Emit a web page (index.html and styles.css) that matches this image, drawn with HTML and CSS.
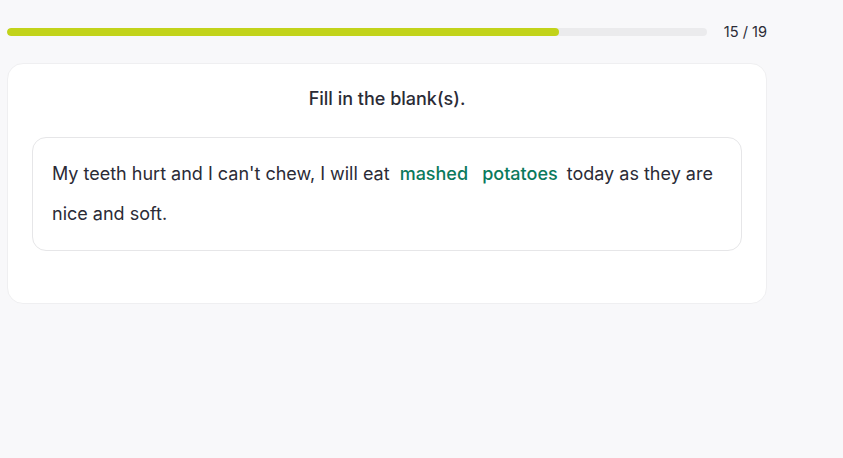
FILE: index.html
```html
<!DOCTYPE html>
<html>
<head>
<meta charset="utf-8">
<link rel="stylesheet" href="styles.css">
</head>
<body>
<div class="wrap">
  <div class="progress-row">
    <div class="track"><div class="fill" style="width: 78.9%"></div></div>
    <div class="count">15 / 19</div>
  </div>
  <div class="card">
    <div class="title">Fill in the blank(s).</div>
    <div class="sentence-box">
      <p class="sentence">My teeth hurt and I can't chew, I will eat <span class="blank">mashed</span> <span class="blank">potatoes</span> today as they are nice and soft.</p>
    </div>
  </div>
</div>
</body>
</html>
```
FILE: styles.css
```css
html, body {
  margin: 0;
  padding: 0;
  background: #f8f8fa;
  font-family: Inter, "Noto Sans", sans-serif;
  color: #2b2b36;
}
.wrap {
  width: 760px;
  padding: 24px 0 0 7px;
}
.progress-row {
  display: flex;
  align-items: center;
  height: 16px;
}
.track {
  width: 700px;
  height: 8px;
  border-radius: 4px;
  background: #ebebed;
  overflow: hidden;
}
.fill {
  height: 100%;
  background: #c2d31a;
  border-radius: 4px;
}
.count {
  margin-left: 17px;
  font-size: 14.6px;
  color: #2b2b36;
}
.card {
  margin-top: 23px;
  margin-left: 0;
  background: #fff;
  border: 1px solid #efeff1;
  border-radius: 16px;
  padding: 24px 24px 52px 24px;
}
.title {
  text-align: center;
  font-size: 18px;
  font-weight: 500;
  line-height: 22px;
  margin-bottom: 27px;
}
.sentence-box {
  border: 1px solid #e6e6e8;
  border-radius: 14px;
  padding: 16px 19px 16px 19px;
}
.sentence {
  margin: 0;
  font-size: 18px;
  line-height: 40px;
}
.blank {
  color: #0b7a5c;
  font-weight: 500;
  margin: 0 4px 0 5px;
}
```
